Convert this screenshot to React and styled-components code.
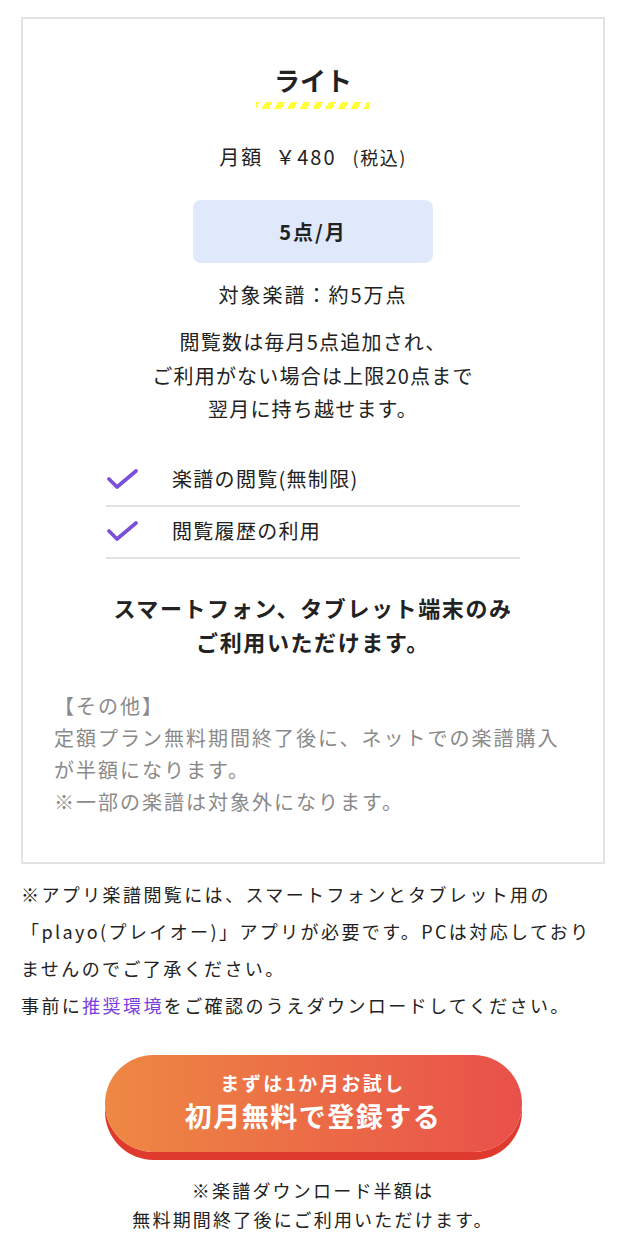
import React from "react";
import styled, { createGlobalStyle } from "styled-components";

const GlobalStyle = createGlobalStyle`
  * { box-sizing: border-box; }
  body {
    margin: 0;
    background: #fff;
    font-family: "Noto Sans CJK JP", "Noto Sans", sans-serif;
    color: #222;
  }
`;

const Page = styled.div`
  width: 626px;
  padding: 17px 21px 0;
`;

const Card = styled.section`
  border: 2px solid #e3e3e3;
  padding: 40px 0 44px;
  display: flex;
  flex-direction: column;
  align-items: center;
`;

const Title = styled.h2`
  margin: 0;
  font-size: 26px;
  font-weight: 700;
  line-height: 42px;
  text-align: center;
`;

const Stripe = styled.div`
  width: 114px;
  height: 7px;
  margin-top: 1px;
  background: repeating-linear-gradient(
    -60deg,
    #ffff3a 0 6px,
    transparent 6px 11px
  );
`;

const Price = styled.p`
  margin: 33px 0 0;
  font-size: 20px;
  line-height: 30px;
  letter-spacing: 2px;
  white-space: pre;
  span.yen { margin-left: 12px; }
  span.tax { font-size: 18px; margin-left: 16px; letter-spacing: 1.5px; }
`;

const Quota = styled.div`
  margin-top: 28px;
  width: 240px;
  height: 63px;
  border-radius: 8px;
  background: #dfe9fb;
  display: flex;
  align-items: center;
  justify-content: center;
  font-size: 20px;
  font-weight: 700;
  letter-spacing: 2px;
`;

const Target = styled.p`
  margin: 16px 0 0;
  font-size: 20px;
  line-height: 32px;
  letter-spacing: 2px;
`;

const Note = styled.p`
  margin: 14px 0 0;
  font-size: 20px;
  line-height: 33.5px;
  letter-spacing: 1.2px;
  text-align: center;
`;

const Features = styled.ul`
  list-style: none;
  margin: 29px 0 0;
  padding: 0;
  width: 414px;
`;

const Feature = styled.li`
  display: flex;
  align-items: center;
  height: 52px;
  border-bottom: 2px solid #e2e2e2;
  font-size: 20px;
  letter-spacing: 1.3px;
  padding-bottom: 2px;
  svg { margin: 0 34px 0 1px; flex: none; }
`;

const Notice = styled.p`
  margin: 31px 0 0;
  font-size: 22px;
  font-weight: 700;
  line-height: 34px;
  letter-spacing: 1.6px;
  text-align: center;
`;

const Other = styled.div`
  align-self: stretch;
  margin-top: 32px;
  padding: 0 20px 0 31px;
  color: #8a8a8a;
  font-size: 20px;
  line-height: 32px;
  letter-spacing: 2px;
  white-space: nowrap;
  p { margin: 0; }
`;

const Info = styled.div`
  margin-top: 12px;
  font-size: 18px;
  line-height: 37px;
  letter-spacing: 2.4px;
  white-space: nowrap;
  p { margin: 0; }
  a { color: #7a3fe0; text-decoration: none; }
`;

const Cta = styled.button`
  display: flex;
  flex-direction: column;
  align-items: center;
  justify-content: center;
  margin: 31px auto 0;
  width: 417px;
  height: 97px;
  border: none;
  border-radius: 49px;
  background: linear-gradient(90deg, #ee8843, #e9504a);
  box-shadow: 0 8px 0 #de3a2e;
  color: #fff;
  font-family: inherit;
  font-weight: 700;
  cursor: pointer;
`;

const CtaSmall = styled.span`
  font-size: 19px;
  line-height: 26px;
  letter-spacing: 2.5px;
`;

const CtaLarge = styled.span`
  font-size: 27px;
  line-height: 40px;
  letter-spacing: 1.5px;
`;

const Footnote = styled.p`
  margin: 24px 0 0;
  font-size: 18px;
  line-height: 29px;
  letter-spacing: 2.2px;
  text-align: center;
`;

const Check = () => (
  <svg width="31" height="22" viewBox="0 0 31 22" fill="none">
    <path
      d="M2 11 L10 19 L29 3"
      stroke="#7a4fd9"
      strokeWidth="3.6"
      strokeLinecap="round"
      strokeLinejoin="round"
    />
  </svg>
);

const features = ["楽譜の閲覧(無制限)", "閲覧履歴の利用"];

export default function App() {
  return (
    <>
      <GlobalStyle />
      <Page>
        <Card>
          <Title>ライト</Title>
          <Stripe />
          <Price>
            月額<span className="yen">￥480</span>
            <span className="tax">(税込)</span>
          </Price>
          <Quota>5点/月</Quota>
          <Target>対象楽譜：約5万点</Target>
          <Note>
            閲覧数は毎月5点追加され、
            <br />
            ご利用がない場合は上限20点まで
            <br />
            翌月に持ち越せます。
          </Note>
          <Features>
            {features.map((f) => (
              <Feature key={f}>
                <Check />
                {f}
              </Feature>
            ))}
          </Features>
          <Notice>
            スマートフォン、タブレット端末のみ
            <br />
            ご利用いただけます。
          </Notice>
          <Other>
            <p>【その他】</p>
            <p>
              定額プラン無料期間終了後に、ネットでの楽譜購入
              <br />
              が半額になります。
            </p>
            <p>※一部の楽譜は対象外になります。</p>
          </Other>
        </Card>
        <Info>
          <p>
            ※アプリ楽譜閲覧には、スマートフォンとタブレット用の
            <br />
            「playo(プレイオー)」アプリが必要です。PCは対応しており
            <br />
            ませんのでご了承ください。
          </p>
          <p>
            事前に<a href="#">推奨環境</a>をご確認のうえダウンロードしてください。
          </p>
        </Info>
        <Cta>
          <CtaSmall>まずは1か月お試し</CtaSmall>
          <CtaLarge>初月無料で登録する</CtaLarge>
        </Cta>
        <Footnote>
          ※楽譜ダウンロード半額は
          <br />
          無料期間終了後にご利用いただけます。
        </Footnote>
      </Page>
    </>
  );
}
